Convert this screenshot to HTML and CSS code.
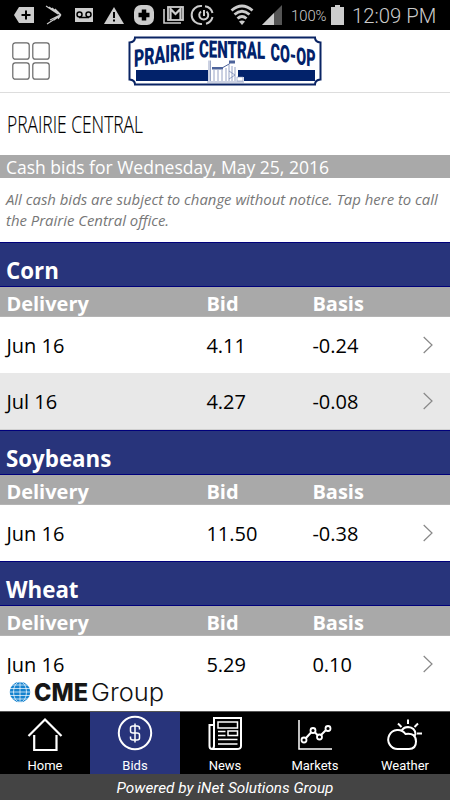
FILE: index.html
```html
<!DOCTYPE html>
<html lang="en">
<head>
  <meta charset="UTF-8">
  <meta name="viewport" content="width=device-width, initial-scale=1">
  <title>Prairie Central Co-Op</title>
  <link rel="stylesheet" href="styles.css">
</head>
<body>
  <div class="statusbar">
    <svg class="status-icons" width="225" height="30" viewBox="0 0 225 30">
      <g fill="#ccc">
        <path d="M14 15 L19 7 H34 V23 H19Z"/>
        <path d="M75 8 H93 V22 H75Z"/>
        <path d="M114 7 L124 24 H104Z"/>
        <rect x="134" y="5" width="20" height="20" rx="7"/>
      </g>
      <g stroke="#000" fill="none" stroke-width="2">
        <path d="M26 10.500V19.500M21.500 15H30.500"/>
        <circle cx="79.500" cy="14.500" r="2.500" stroke-width="1.500"/>
        <circle cx="88.500" cy="14.500" r="2.500" stroke-width="1.500"/>
        <path d="M79 17.500H89" stroke-width="1.500"/>
        <path d="M114 12V18M114 19.500V21.500"/>
        <path d="M144 9.500V20.500M138.500 15H149.500" stroke-width="4.500"/>
      </g>
      <g fill="none" stroke="#ccc">
        <path d="M46 6L58 14M49 7L59 14M52 8L60 14.500M55 9L61 15M58 12L61 15M47 24L61 15M50 20L60 15M54 20L61 15M58 19L61 15" stroke-width="1.100"/>
        <rect x="168" y="7" width="15" height="13" stroke-width="1.800"/>
        <path d="M170.500 20V9L175.500 14L180.500 9V20" stroke-width="2.200"/>
        <path d="M164 9V23H181" stroke-width="1.600"/>
        <path d="M205 6.200A9 9 0 0 1 212.500 13M212.500 17A9 9 0 0 1 206 23.700M202 23.900A9 9 0 1 1 202 6.100" stroke-width="2"/>
        <path d="M206.500 11.500A4.500 4.500 0 1 1 201 11.500M204 10V16" stroke-width="2"/>
      </g>
    </svg>
    <svg class="status-icons" width="62" height="30" viewBox="0 0 62 30">
      <g fill="none" stroke="#ccc" stroke-width="2.800">
        <path d="M6.500 10.500Q17 1.500 27.500 10.500M9.500 14.500Q17 8 24.500 14.500M12.500 18.500Q17 14.500 21.500 18.500"/>
      </g>
      <path d="M17 25L14 21.500Q17 19.500 20 21.500Z" fill="#ccc"/>
      <path d="M37 25L57 5V25Z" fill="#555"/>
      <path d="M37 25L49 13V25Z" fill="#ccc"/>
    </svg>
    <span class="battery-text">100%</span>
    <svg class="battery" width="13" height="20" viewBox="0 0 13 20">
      <path d="M4 0H9V2H13V20H0V2H4Z" fill="#ccc"/>
    </svg>
    <span class="clock">12:09 PM</span>
  </div>

  <header class="header">
    <svg class="grid-icon" width="38" height="38" viewBox="0 0 38 38">
      <g fill="#fff" stroke="#666" stroke-width="1.200">
        <rect x=".8" y=".8" width="16.400" height="16.400" rx="2.500"/>
        <rect x="20.800" y=".8" width="16.400" height="16.400" rx="2.500"/>
        <rect x=".8" y="20.800" width="16.400" height="16.400" rx="2.500"/>
        <rect x="20.800" y="20.800" width="16.400" height="16.400" rx="2.500"/>
      </g>
    </svg>
    <svg class="logo" width="194" height="50" viewBox="0 0 194 50">
      <path d="M7 1.500H187Q187 6 192.500 6.500V43.500Q187 44 187 48.500H7Q7 44 1.500 43.500V6.500Q7 6 7 1.500Z" fill="#fff" stroke="#0a2464" stroke-width="2"/>
      <path d="M8 34H187V45H8Z" fill="#02226a"/>
      <g class="logo-text">
        <text transform="translate(6 31) skewY(-8)" textLength="60" lengthAdjust="spacingAndGlyphs">PRAIRIE</text>
        <text transform="translate(71 21.300) skewY(1.500)" textLength="66" lengthAdjust="spacingAndGlyphs">CENTRAL</text>
        <text transform="translate(142.500 24) skewY(9)" textLength="45" lengthAdjust="spacingAndGlyphs">CO-OP</text>
      </g>
      <!-- grain elevator -->
      <path d="M80 46.500V24H83V31H94L101 27V24H107V30L110 34V41H116V46.500Z" fill="#fff"/>
      <path d="M81 45V24.500M82.500 45V24.500M86 34V45M90 34V45M94 34V45M98 32V45M101 29V45M104 30V45M107 31V45M101 35L107 39L101 43M79 46H116" fill="none" stroke="#7b8cb5" stroke-width=".8"/>
      <path d="M84 31H95V33.500H84ZM101 24.500H107V27.500H101Z" fill="#4d639a"/>
      <path d="M94 32L102 27.500" stroke="#4d639a" stroke-width="1"/>
      <path d="M109 41H115V45H109Z" fill="#fff" stroke="#7b8cb5" stroke-width=".6"/>
    </svg>
  </header>

  <main class="content">
    <h1 class="title">
      <svg width="140" height="32" viewBox="0 0 140 32">
        <text x="0" y="25" textLength="136" lengthAdjust="spacingAndGlyphs">PRAIRIE CENTRAL</text>
      </svg>
    </h1>
    <div class="date">Cash bids for Wednesday, May 25, 2016</div>
    <p class="notice">All cash bids are subject to change without notice. Tap here to call<br>the Prairie Central office.</p>

    <section>
      <h2>Corn</h2>
      <div class="row head"><span>Delivery</span><span>Bid</span><span>Basis</span></div>
      <div class="row"><span>Jun 16</span><span>4.11</span><span>-0.24</span>
        <svg class="chevron" viewBox="0 0 10 18"><path d="M.7 1L9 9L.7 17"/></svg></div>
      <div class="row alt"><span>Jul 16</span><span>4.27</span><span>-0.08</span>
        <svg class="chevron" viewBox="0 0 10 18"><path d="M.7 1L9 9L.7 17"/></svg></div>
    </section>
    <section>
      <h2>Soybeans</h2>
      <div class="row head"><span>Delivery</span><span>Bid</span><span>Basis</span></div>
      <div class="row"><span>Jun 16</span><span>11.50</span><span>-0.38</span>
        <svg class="chevron" viewBox="0 0 10 18"><path d="M.7 1L9 9L.7 17"/></svg></div>
    </section>
    <section>
      <h2>Wheat</h2>
      <div class="row head"><span>Delivery</span><span>Bid</span><span>Basis</span></div>
      <div class="row"><span>Jun 16</span><span>5.29</span><span>0.10</span>
        <svg class="chevron" viewBox="0 0 10 18"><path d="M.7 1L9 9L.7 17"/></svg></div>
    </section>
  </main>

  <div class="bottom">
    <div class="sponsor">
      <svg width="170" height="37" viewBox="0 0 170 37">
        <circle cx="20" cy="18" r="10.300" fill="#1683cf"/>
        <g fill="none" stroke="#fff" stroke-width=".7">
          <ellipse cx="20" cy="18" rx="6.500" ry="10.300"/>
          <path d="M20 7V29M9 14.500H31M9 18H31M9 21.500H31M11 11H29M11 25H29"/>
        </g>
        <text class="cme" x="34" y="26.500" textLength="54" lengthAdjust="spacingAndGlyphs">CME</text>
        <text class="group" x="91" y="26.500" textLength="73" lengthAdjust="spacingAndGlyphs">Group</text>
      </svg>
    </div>
    <nav class="tabs">
      <a class="tab">
        <svg viewBox="0 0 40 40"><path d="M3.500 21L20 4.500L36.500 21M9.200 20V35H31.500V20" stroke-width="2.200"/></svg>
        <span>Home</span>
      </a>
      <a class="tab active">
        <svg viewBox="0 0 40 40"><circle cx="20" cy="18" r="16.200" stroke-width="2"/><path d="M24.500 14.500V13Q24.500 11 22 11H18Q15.500 11 15.500 13V16Q15.500 18 18 18H22Q24.500 18 24.500 20V23Q24.500 25 22 25H18Q15.500 25 15.500 23V21.500M20 8.500V27.500" stroke-width="1.500"/></svg>
        <span>Bids</span>
      </a>
      <a class="tab">
        <svg viewBox="0 0 40 40"><path d="M9 10H4.500V31Q4.500 34 7 34H32Q36 34 36 31V3H9V31Q9 34 6.500 34" stroke-width="2"/><path d="M13 7H32.500V13H13ZM23 16H32.500V20.500H23ZM13 16.500H20.500M13 20.500H20.500M13 24.500H32.500M13 29H32.500" stroke-width="1.500"/></svg>
        <span>News</span>
      </a>
      <a class="tab">
        <svg viewBox="0 0 40 40"><path d="M4 5V34H37" stroke-width="1.500"/><path d="M11 23L16.500 17M19.500 17L23 20.500M26 20L31 15" stroke-width="2"/><circle cx="9" cy="25" r="2.500"/><circle cx="18" cy="15.500" r="2.500"/><circle cx="24.500" cy="22" r="2.500"/><circle cx="33" cy="13.500" r="2.500"/></svg>
        <span>Markets</span>
      </a>
      <a class="tab">
        <svg viewBox="0 0 40 40"><path d="M13 34A9.500 9.500 0 1 1 20.500 19Q31 17.500 31 26.500Q31 34 24 34ZM17 15Q19 12 23 12Q30 12.500 30.500 19Q30 21 28.500 22M23 4.500V9M13 8.500L16.500 12M33 8.500L29.500 12M32 18.500H37" stroke-width="2"/></svg>
        <span>Weather</span>
      </a>
    </nav>
    <footer class="footer">Powered by iNet Solutions Group</footer>
  </div>
</body>
</html>
```
FILE: styles.css
```css
* {
  box-sizing: border-box;
}

body {
  margin: 0;
  height: 800px;
  display: flex;
  flex-direction: column;
  overflow: hidden;
  background: #fff;
  color: #000;
  font-family: "Open Sans", "Noto Sans", sans-serif;
}

svg {
  display: block;
  flex: none;
}

.statusbar {
  height: 30px;
  flex: none;
  display: flex;
  align-items: center;
  background: #000;
  color: #ccc;
  font-family: Roboto, sans-serif;
  white-space: nowrap;
}

.battery-text {
  width: 44px;
  padding-left: 4px;
  font-size: 14.8px;
  line-height: 30px;
  padding-top: 2px;
  font-weight: 300;
}

.clock {
  padding-left: 8px;
  padding-top: 1px;
  font-size: 20.3px;
  font-weight: 300;
}

.header {
  height: 63px;
  flex: none;
  display: flex;
  align-items: flex-start;
  border-bottom: 1px solid #ddd;
  padding: 6px 0 0 12px;
}

.grid-icon {
  margin-top: 6px;
}

.logo {
  margin-left: 78px;
}

.logo-text text {
  font-family: Roboto, sans-serif;
  font-weight: 900;
  font-size: 24px;
  fill: #02226a;
}

.content {
  flex: 1;
  min-height: 0;
  overflow: hidden;
}

.title {
  margin: 0;
  height: 62px;
  padding: 15px 0 0 7px;
}

.title text {
  font-size: 24.5px;
  font-weight: 300;
  stroke: #000;
  stroke-width: 0.15;
}

.date {
  height: 23px;
  padding-left: 6px;
  background: #a9a9a9;
  color: #fff;
  font-size: 17.5px;
  line-height: 24px;
  white-space: nowrap;
}

.notice {
  margin: 0;
  height: 64px;
  padding: 11px 0 0 6px;
  color: #777;
  font-size: 14.9px;
  font-style: italic;
  line-height: 20.5px;
  white-space: nowrap;
}

h2 {
  margin: 0;
  height: 45px;
  padding: 12px 0 0 6px;
  border-top: 1px solid #00007b;
  border-bottom: 1px solid #00007b;
  background: #28347b;
  color: #fff;
  font-size: 22.3px;
  line-height: 32px;
}

.row {
  height: 56px;
  display: grid;
  grid-template-columns: 200px 106px 110px 1fr;
  align-items: center;
  padding-left: 6.4px;
  font-size: 20px;
}

.row.head {
  height: 30px;
  padding-top: 5px;
  border-bottom: 1px solid #b4b4b4;
  background: #a9a9a9;
  color: #fff;
  font-weight: bold;
  line-height: 24px;
}

.row.alt {
  height: 57px;
  border-bottom: 1px solid #d0d0d0;
  background: #e8e8e8;
}

.chevron {
  width: 10px;
  height: 18px;
  margin-left: 1px;
}

.chevron path {
  fill: none;
  stroke: #888;
  stroke-width: 1.2;
}

.bottom {
  height: 126px;
  flex: none;
}

.sponsor {
  height: 37px;
  background: #fff;
}

.cme {
  font-family: Inter, "Open Sans", sans-serif;
  font-size: 24px;
  font-weight: 800;
  fill: #161616;
}

.group {
  font-family: Inter, "Open Sans", sans-serif;
  font-size: 24px;
  font-weight: 300;
  fill: #111;
}

.tabs {
  height: 63px;
  display: flex;
  border-top: 1px solid #555;
  background: #000;
  color: #fff;
}

.tab {
  flex: 1;
  display: flex;
  flex-direction: column;
  align-items: center;
  padding-top: 3px;
  font-family: Roboto, sans-serif;
  font-size: 13px;
  line-height: 15px;
}

.tab svg {
  width: 40px;
  height: 40px;
  margin-bottom: 3px;
  fill: none;
  stroke: #fff;
  stroke-width: 1.8;
}

.tab.active {
  background: #28347b;
}

.footer {
  height: 26px;
  background: #444;
  color: #fff;
  font-family: Roboto, sans-serif;
  font-size: 15.3px;
  font-style: italic;
  line-height: 28px;
  text-align: center;
}
```
